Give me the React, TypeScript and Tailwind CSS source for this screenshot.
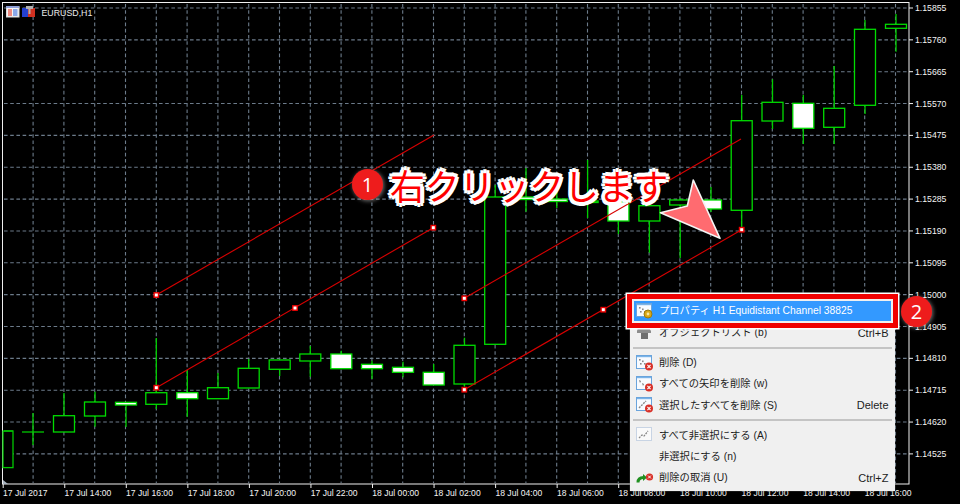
import type { ReactNode } from "react";

const gridX = Array.from({ length: 29 }, (_, i) => 33.1 + 30.8 * i);
const gridY = Array.from({ length: 15 }, (_, i) => 8 + 31.85 * i);

const prices = [
  "1.15855", "1.15760", "1.15665", "1.15570", "1.15475",
  "1.15380", "1.15285", "1.15190", "1.15095", "1.15000",
  "1.14905", "1.14810", "1.14715", "1.14620", "1.14525",
];

const times = [
  "17 Jul 2017", "17 Jul 14:00", "17 Jul 16:00", "17 Jul 18:00", "17 Jul 20:00",
  "17 Jul 22:00", "18 Jul 00:00", "18 Jul 02:00", "18 Jul 04:00", "18 Jul 06:00",
  "18 Jul 08:00", "18 Jul 10:00", "18 Jul 12:00", "18 Jul 14:00", "18 Jul 16:00",
];

// x, body top, body bottom, wick top, wick bottom, bullish (white body)
const candles: Array<[number, number, number, number, number, boolean]> = [
  [33, 432, 432, 413, 445, false],
  [64, 415.7, 432, 393, 432, false],
  [95, 402, 416, 391.7, 426.7, false],
  [126, 402.3, 405, 402, 427, true],
  [156.3, 392.7, 404.3, 338, 409, false],
  [187.3, 392.7, 398.7, 370, 416.7, true],
  [218, 387.7, 398.7, 373, 399, false],
  [248.7, 368.3, 388, 359, 388, false],
  [279.7, 360, 369.3, 360, 376, false],
  [310.3, 354, 361, 346, 376.7, false],
  [341.3, 354, 368.7, 350.7, 369, true],
  [372, 364.3, 368.7, 360.7, 379, true],
  [403, 367.3, 372.3, 361.7, 377.3, true],
  [433.7, 372.3, 385, 364, 385, true],
  [464.5, 345.3, 384, 337.7, 386.7, false],
  [495.2, 197, 344.3, 185, 344.3, false],
  [526, 197, 199.5, 168, 211.7, true],
  [556.8, 199, 201.5, 180, 208, true],
  [587.6, 201, 202.5, 160, 218, false],
  [618.4, 201.7, 221, 190, 234, true],
  [649.4, 205.7, 221, 195, 252.7, false],
  [680.2, 200, 205, 198, 258, false],
  [711, 200, 209, 187, 212, true],
  [741.7, 120.7, 210.3, 95, 230, false],
  [772.5, 102.3, 121, 79.3, 129, false],
  [803.3, 103.3, 128.3, 95, 144, true],
  [834.2, 108.3, 127.3, 66, 144, false],
  [865, 29.3, 105.3, 20, 114, false],
  [896, 24.3, 28.3, 14, 51.7, false],
];

const channelLines = [
  [156.3, 387.7, 433.3, 227.7],
  [156.3, 295, 434, 135],
  [464.3, 298.3, 741, 139],
  [464.3, 389.7, 741.7, 229.7],
];

const handles = [
  [156.3, 387.7], [295, 308], [433.3, 227.7], [156.3, 295],
  [464.3, 298.3], [464.3, 389.7], [603.3, 309.7], [741.7, 229.7],
];

function Chart() {
  return (
    <svg width="960" height="504" viewBox="0 0 960 504" className="block">
      {gridX.map((x) => (
        <line key={x} x1={x} y1={4} x2={x} y2={483} stroke="#6c7b8a" strokeWidth="1.1" strokeDasharray="3.6 2.6" />
      ))}
      {gridY.map((y) => (
        <line key={y} x1={4} y1={y} x2={908} y2={y} stroke="#6c7b8a" strokeWidth="1.1" strokeDasharray="3.6 2.6" />
      ))}

      <rect x="2.5" y="2.5" width="906.5" height="481.5" fill="none" stroke="#f0f0f0" strokeWidth="1" />
      <polygon points="3,480 3,484 8,484" fill="#a9b4c0" />

      {gridY.map((y) => (
        <line key={y} x1={909} y1={y} x2={913} y2={y} stroke="#f0f0f0" strokeWidth="1" />
      ))}
      {times.map((t, i) => (
        <line key={t} x1={3.2 + 61.55 * i} y1={484} x2={3.2 + 61.55 * i} y2={488} stroke="#f0f0f0" strokeWidth="1" />
      ))}

      {/* first candle is cut by the left edge */}
      <rect x="3" y="431" width="10" height="36.6" fill="#000" stroke="#00c800" strokeWidth="1.3" />
      <line x1="4" y1="431" x2="13" y2="431" stroke="#00c800" strokeWidth="1.3" />

      {candles.map(([x, top, bottom, wickTop, wickBottom, bull]) => (
        <g key={x}>
          <line x1={x} y1={wickTop} x2={x} y2={wickBottom} stroke="#00d000" strokeWidth="1.3" />
          {top === bottom ? (
            <line x1={x - 11} y1={top} x2={x + 11} y2={top} stroke="#00c800" strokeWidth="1.3" />
          ) : (
            <rect
              x={x - 10.5}
              y={top}
              width="21"
              height={bottom - top}
              fill={bull ? "#ffffff" : "#000000"}
              stroke="#00dc00"
              strokeWidth="1.3"
            />
          )}
        </g>
      ))}

      {channelLines.map(([x1, y1, x2, y2]) => (
        <line key={`${x1}-${y1}`} x1={x1} y1={y1} x2={x2} y2={y2} stroke="#d80000" strokeWidth="1.1" />
      ))}
      {handles.map(([x, y]) => (
        <rect key={`${x}-${y}`} x={x - 2.2} y={y - 2.2} width="4.4" height="4.4" fill="#ffffff" stroke="#ee0000" strokeWidth="1.4" />
      ))}

      {prices.map((p, i) => (
        <text key={p} x="915" y={gridY[i] + 3} fill="#f4f4f4" fontSize="8.7" fontFamily="Liberation Sans, sans-serif">
          {p}
        </text>
      ))}
      {times.map((t, i) => (
        <text key={t} x={3 + 61.55 * i} y="495.5" fill="#f4f4f4" fontSize="8.6" fontFamily="Liberation Sans, sans-serif">
          {t}
        </text>
      ))}

      {/* title icons */}
      <rect x="6.5" y="6.5" width="12.5" height="10.5" fill="#f4f4f4" stroke="#d8d8d8" strokeWidth="1" />
      <rect x="6" y="6" width="13" height="2" fill="#8f9fd6" />
      <rect x="8" y="9" width="4" height="7" fill="#ee8a80" />
      <rect x="13" y="9" width="4.5" height="7" fill="#8aa8e8" />
      <rect x="22" y="8" width="6" height="9" fill="#2440d0" />
      <rect x="28" y="8" width="7" height="9" fill="#d03020" />
      <rect x="26" y="6" width="7" height="3" fill="#b0b0b0" />
      <rect x="28.5" y="9" width="2" height="5" fill="#b0b0b0" />
      <text x="41.5" y="15.5" fill="#ececec" fontSize="8.8" fontFamily="Liberation Sans, sans-serif">
        EURUSD,H1
      </text>

      {/* pointer */}
      <polygon
        points="693.3,180 687.3,206 660.5,212.7 720,238.3"
        fill="#ff6b70"
        stroke="#f4f4f4"
        strokeWidth="1.6"
        strokeLinejoin="round"
      />
    </svg>
  );
}

function IconFrame({ children }: { children?: ReactNode }) {
  return (
    <svg width="18" height="16" viewBox="0 0 18 16" className="block">
      <rect x="0.5" y="0.5" width="15" height="13" fill="#f8fbff" stroke="#6aa4dc" />
      <rect x="1" y="1" width="14" height="1.2" fill="#7ab4e8" />
      {children}
    </svg>
  );
}

function CrossBadge() {
  return (
    <g>
      <circle cx="13" cy="11.5" r="4" fill="#d83028" />
      <path d="M11.4 9.9l3.2 3.2M14.6 9.9l-3.2 3.2" stroke="#fff" strokeWidth="1.1" />
    </g>
  );
}

function Dots() {
  return (
    <g fill="#8a8a8a">
      <rect x="3" y="4" width="1.6" height="1.6" />
      <rect x="6" y="5.5" width="1.6" height="1.6" />
      <rect x="4" y="8" width="1.6" height="1.6" />
      <rect x="8" y="8" width="1.6" height="1.6" />
    </g>
  );
}

function MenuRow({
  label,
  shortcut,
  icon,
}: {
  label: string;
  shortcut?: string;
  icon?: ReactNode;
}) {
  return (
    <div className="flex h-[21.3px] items-center pl-[6px] pr-[6.5px] text-[10.3px] text-[#1c1c1c]">
      <span className="flex w-[23px] shrink-0 items-center">{icon}</span>
      <span className="flex-1 whitespace-nowrap">{label}</span>
      {shortcut ? <span className="whitespace-nowrap text-[11px]">{shortcut}</span> : null}
    </div>
  );
}

function Separator() {
  return <div className="mx-[3px] my-[3.3px] h-[2px] bg-[#c4c4c4]" />;
}

function ContextMenu() {
  return (
    <div className="absolute left-[630px] top-[298px] h-[193px] w-[265px] bg-[#f0f0f0] pt-[3px] shadow-[0_0_1px_#888] [font-family:'Liberation_Sans','Noto_Sans_CJK_JP',sans-serif]">
      <div className="relative z-10 mx-[4px] mb-[1.3px] flex h-[20px] items-center bg-[#3399ff] pl-[2px] text-[10.3px] text-white">
        <span className="flex w-[23px] shrink-0 items-center">
          <IconFrame>
            <Dots />
            <circle cx="12" cy="11" r="4" fill="#d8a818" stroke="#9a7a10" strokeWidth="1" />
            <circle cx="12" cy="11" r="1.4" fill="#f8e8a0" />
          </IconFrame>
        </span>
        <span className="whitespace-nowrap">プロパティ H1 Equidistant Channel 38825</span>
        <div className="absolute -inset-y-[7px] -left-[7px] -right-[7px] border-[5px] border-[#f00000] shadow-[0_0_0_1.5px_#ffffff]" />
      </div>
      <MenuRow
        label="オブジェクトリスト (b)"
        shortcut="Ctrl+B"
        icon={
          <svg width="18" height="16" viewBox="0 0 18 16" className="block">
            <path d="M2 3h11l2 3v2H1V6z" fill="#8c8c8c" />
            <rect x="5" y="8" width="7" height="6" fill="#6e6e6e" />
          </svg>
        }
      />
      <Separator />
      <MenuRow
        label="削除 (D)"
        icon={
          <IconFrame>
            <Dots />
            <CrossBadge />
          </IconFrame>
        }
      />
      <MenuRow
        label="すべての矢印を削除 (w)"
        icon={
          <IconFrame>
            <path d="M3 4l2 1-1 2zM6 7l2 1-1 2z" fill="#777" />
            <CrossBadge />
          </IconFrame>
        }
      />
      <MenuRow
        label="選択したすべてを削除 (S)"
        shortcut="Delete"
        icon={
          <IconFrame>
            <path d="M3 11l7-7" stroke="#888" strokeWidth="1.4" strokeDasharray="2 1" />
            <CrossBadge />
          </IconFrame>
        }
      />
      <Separator />
      <MenuRow
        label="すべて非選択にする (A)"
        icon={
          <svg width="18" height="16" viewBox="0 0 18 16" className="block">
            <rect x="0.5" y="0.5" width="15" height="13" fill="#fafafa" stroke="#c8d4e4" />
            <path d="M3 11l3-3 2 1 4-5" stroke="#888" strokeWidth="1.3" fill="none" strokeDasharray="2 1" />
          </svg>
        }
      />
      <MenuRow label="非選択にする (n)" />
      <MenuRow
        label="削除の取消 (U)"
        shortcut="Ctrl+Z"
        icon={
          <svg width="18" height="16" viewBox="0 0 18 16" className="block">
            <path d="M2 12.5c0-3 2-5 5.5-5" stroke="#209020" strokeWidth="3" fill="none" />
            <path d="M7 4l4 3.5-4 3.5z" fill="#209020" />
            <circle cx="13.5" cy="7" r="3.6" fill="#d83028" />
            <path d="M12.1 5.6l2.8 2.8M14.9 5.6l-2.8 2.8" stroke="#fff" strokeWidth="1" />
          </svg>
        }
      />
    </div>
  );
}

function StepBadge({ n, className }: { n: number; className: string }) {
  return (
    <div
      className={`absolute flex h-[31px] w-[31px] items-center justify-center rounded-full bg-[#ee1c1c] text-[20px] font-medium text-white shadow-[1px_1px_4px_rgba(255,255,255,0.45)] [font-family:'Open_Sans',sans-serif] ${className}`}
    >
      {n}
    </div>
  );
}

export default function App() {
  return (
    <div className="relative h-[504px] w-[960px] overflow-hidden bg-black">
      <Chart />
      <ContextMenu />
      <StepBadge n={1} className="left-[352px] top-[169px]" />
      <StepBadge n={2} className="left-[901px] top-[296px]" />
      <div className="absolute left-[390px] top-[160px] whitespace-nowrap text-[34.8px] font-normal leading-[50px] text-[#ff0000] [font-family:'Noto_Sans_CJK_JP',sans-serif] [text-shadow:4px_0_0_#fff,-4px_0_0_#fff,0_4px_0_#fff,0_-4px_0_#fff,3px_3px_0_#fff,-3px_3px_0_#fff,3px_-3px_0_#fff,-3px_-3px_0_#fff,2px_0_0_#fff,-2px_0_0_#fff,0_2px_0_#fff,0_-2px_0_#fff]">
        右クリックします
      </div>
    </div>
  );
}
